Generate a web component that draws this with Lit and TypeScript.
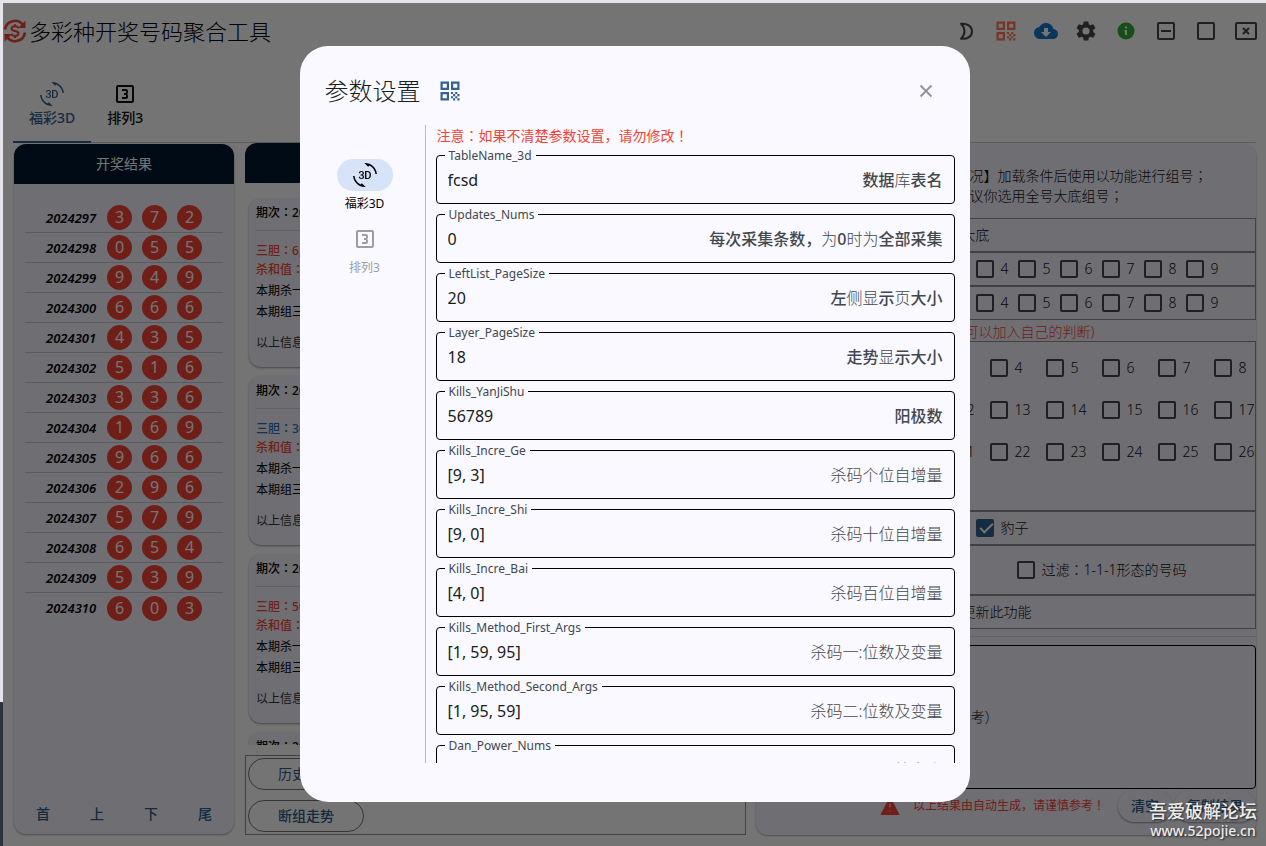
import { LitElement, html, css, svg } from "lit";
import { customElement } from "lit/decorators.js";

const base = css`
  * { box-sizing: border-box; }
  :host {
    font-family: "Noto Sans", "Noto Sans CJK SC", sans-serif;
    font-size: 14px;
    line-height: 20px;
  }
  button {
    font: inherit;
    color: inherit;
    background: none;
    border: 0;
    padding: 0;
    cursor: pointer;
  }
  .icon { display: block; width: 24px; height: 24px; fill: currentColor; flex: none; }
  .mark { font-family: "Noto Sans CJK TC", sans-serif; line-height: 1; }
`;

/* Colons, semicolons and exclamation marks are set in the face that centres them. */
const zh = (text: string) =>
  text.split(/([：；！])/).map(part => (/^[：；！]$/.test(part) ? html`<span class="mark" lang="zh-TW">${part}</span>` : part));

const qr = svg`<path fill-rule="evenodd" d="M2.5 2.5h8.5v8.5h-8.5zM4.700 4.700v4.100h4.100v-4.100zM13 2.500h8.500v8.500h-8.500zM15.200 4.700v4.100h4.100v-4.100zM2.500 13h8.500v8.500h-8.500zM4.700 15.200v4.100h4.100v-4.100z"/><path d="M13 13h2.100v2.100h-2.100zM17.200 13h2.100v2.100h-2.100zM15.100 15.100h2.100v2.100h-2.100zM19.300 15.100h2.200v2.100h-2.200zM13 17.200h2.100v2.100h-2.100zM17.200 17.200h2.100v2.100h-2.100zM15.100 19.300h2.100v2.200h-2.100zM19.300 19.300h2.200v2.200h-2.200z"/>`;
const threeD = svg`<path d="M7.520 21.480C4.250 19.940 1.910 16.760 1.550 13H.050C.560 19.160 5.710 24 12 24l.660-.030-3.810-3.810-1.330 1.320zm.890-6.520c-.190 0-.370-.030-.520-.080-.160-.060-.290-.130-.400-.240-.110-.100-.200-.220-.260-.370-.060-.140-.090-.300-.090-.470h-1.300c0 .360.070.680.210.950.140.270.330.500.560.690.240.180.510.320.820.410.300.100.620.150.960.150.370 0 .720-.050 1.030-.150.320-.100.600-.250.830-.440s.420-.430.550-.720c.130-.290.200-.610.200-.970 0-.190-.020-.380-.070-.560-.050-.180-.120-.350-.230-.510-.100-.160-.240-.300-.400-.430-.170-.130-.370-.230-.610-.310.200-.090.370-.200.520-.330s.270-.270.370-.420c.100-.150.170-.300.220-.460.050-.160.070-.320.070-.480 0-.360-.060-.680-.180-.960-.120-.280-.290-.510-.510-.690-.200-.190-.470-.330-.770-.430C9.100 8.050 8.760 8 8.390 8c-.360 0-.690.050-1 .160-.300.110-.570.260-.790.450-.210.190-.380.410-.510.670-.120.260-.180.540-.180.850h1.300c0-.170.030-.320.090-.450s.140-.250.250-.340c.110-.090.230-.170.380-.220.150-.050.300-.080.480-.080.400 0 .700.100.890.310.190.200.290.490.290.860 0 .180-.030.340-.080.490-.050.150-.140.270-.250.370-.110.100-.250.180-.410.240-.160.060-.360.090-.580.090H7.500v1.030h.770c.220 0 .420.020.600.070s.330.130.450.230c.120.110.220.240.290.400.070.160.100.350.100.570 0 .410-.120.720-.350.930-.230.230-.550.330-.950.330zm8.550-5.920c-.320-.330-.700-.590-1.140-.770-.430-.180-.920-.270-1.460-.270H12v8h2.300c.550 0 1.060-.090 1.510-.270.450-.180.840-.430 1.160-.760.320-.330.570-.730.740-1.190.170-.470.260-.990.260-1.570v-.400c0-.580-.090-1.100-.260-1.570-.180-.470-.430-.870-.750-1.200zm-.390 3.160c0 .420-.050.790-.140 1.130-.100.330-.240.620-.430.850-.190.230-.430.410-.710.530-.290.120-.620.180-.990.180h-.910V9.120h.970c.720 0 1.270.230 1.640.690.380.460.570 1.120.570 1.990v.400zM12 0l-.660.030 3.810 3.810 1.330-1.330c3.270 1.550 5.610 4.720 5.960 8.480h1.500C23.440 4.840 18.290 0 12 0z"/>`;
const looks3 = svg`<path d="M19 3H5c-1.100 0-2 .900-2 2v14c0 1.100.900 2 2 2h14c1.100 0 2-.900 2-2V5c0-1.100-.900-2-2-2zm0 16H5V5h14v14zM15 15v-1.500c0-.830-.670-1.500-1.500-1.500.830 0 1.500-.670 1.500-1.500V9c0-1.110-.900-2-2-2H9v2h4v2h-2v2h2v2H9v2h4c1.100 0 2-.890 2-2z"/>`;

const icons = {
  moon: svg`<path fill="none" stroke="currentColor" stroke-width="2" stroke-linejoin="round" d="M7 4.800c6.800-.800 11 3 11 7.700s-4.200 7.800-11 7.200c4.600-4 4.600-10.600 0-14.900z"/>`,
  cloud: svg`<path d="M19.350 10.040C18.670 6.590 15.640 4 12 4 9.110 4 6.600 5.640 5.350 8.040 2.340 8.360 0 10.910 0 14c0 3.310 2.690 6 6 6h13c2.760 0 5-2.240 5-5 0-2.640-2.050-4.780-4.650-4.960zM17 13l-5 5-5-5h3V9h4v4h3z"/>`,
  gear: svg`<path d="M19.140 12.940c.040-.300.060-.610.060-.940s-.020-.640-.070-.940l2.030-1.580a.490.490 0 0 0 .120-.610l-1.920-3.320a.488.488 0 0 0-.590-.220l-2.390.960c-.500-.380-1.030-.700-1.620-.940l-.360-2.540a.484.484 0 0 0-.480-.410h-3.840c-.240 0-.430.170-.470.410l-.360 2.540c-.590.240-1.130.570-1.620.940l-2.390-.960a.477.477 0 0 0-.590.220L2.740 8.870c-.120.210-.080.470.120.610l2.030 1.580c-.050.300-.090.630-.090.940s.020.640.070.940l-2.030 1.580a.490.490 0 0 0-.120.610l1.920 3.320c.120.220.370.290.590.220l2.390-.960c.500.380 1.030.700 1.620.940l.360 2.540c.050.240.240.410.480.410h3.840c.240 0 .440-.170.470-.410l.360-2.540c.590-.240 1.130-.560 1.620-.940l2.390.960c.220.080.470 0 .590-.220l1.920-3.320a.470.470 0 0 0-.120-.610l-2.010-1.580zM12 15.600A3.600 3.600 0 1 1 12 8.400a3.600 3.600 0 0 1 0 7.200z"/>`,
  info: svg`<path fill-rule="evenodd" d="M12 3.500a8.500 8.500 0 1 0 0 17 8.500 8.500 0 0 0 0-17zM11 7.500h2v2h-2zM10.500 11h2.500v5h-2v-3.500h-.500z"/>`,
  minimize: svg`<path fill="none" stroke="currentColor" stroke-width="2" d="M5 4h14q1 0 1 1v14q0 1-1 1H5q-1 0-1-1V5q0-1 1-1zM7 12h10"/>`,
  maximize: svg`<path fill="none" stroke="currentColor" stroke-width="2" d="M5 4h14q1 0 1 1v14q0 1-1 1H5q-1 0-1-1V5q0-1 1-1z"/>`,
  close: svg`<path fill="none" stroke="currentColor" stroke-width="2" d="M3 4h18q1 0 1 1v14q0 1-1 1H3q-1 0-1-1V5q0-1 1-1zM9 9l6 6M15 9l-6 6"/>`,
};

const icon = (shape: unknown) => html`<svg class="icon" viewBox="0 0 24 24" aria-hidden="true">${shape}</svg>`;

@customElement("results-panel")
class ResultsPanel extends LitElement {
  static styles = [base, css`
    :host { display: flex; flex-direction: column; padding: 1px; }
    .panel {
      flex: 1; display: flex; flex-direction: column; overflow: hidden;
      background: #f2f0fb; border-radius: 12px; box-shadow: 0 1px 2px rgba(0, 0, 0, .35);
    }
    .head { background: #001830; color: #fff; text-align: center; line-height: 40px; height: 40px; }
    .draws { list-style: none; margin: 0; padding: 19px 11px 0; flex: 1; }
    .draw {
      display: flex; align-items: center; gap: 10px; height: 30px; padding-left: 21px;
      border-bottom: 1px solid #c6c6cc;
    }
    .draw:last-child { border-bottom: 0; }
    .term { font-size: 13px; font-weight: 600; font-style: italic; width: 51px; color: #000; }
    .ball {
      width: 25px; height: 25px; border-radius: 50%; background: #f44336; color: #fff;
      text-align: center; line-height: 25px; font-size: 16px;
    }
    .pager { display: flex; padding: 0 2px; color: #2b5c8a; height: 40px; }
    .page { flex: 1; font-weight: 500; }
  `];
  render() {
    const draws = ["372", "055", "949", "666", "435", "516", "336", "169", "966", "296", "579", "654", "539", "603"];
    return html`<section class="panel">
      <div class="head">开奖结果</div>
      <ul class="draws">
        ${draws.map((d, i) => html`<li class="draw"><span class="term">${2024297 + i}</span>${[...d].map(n => html`<span class="ball">${n}</span>`)}</li>`)}
      </ul>
      <nav class="pager">${["首", "上", "下", "尾"].map(t => html`<button class="page">${t}</button>`)}</nav>
    </section>`;
  }
}

@customElement("forecast-panel")
class ForecastPanel extends LitElement {
  static styles = [base, css`
    :host { display: flex; flex-direction: column; min-width: 0; min-height: 0; font-size: 12px; }
    .head { background: #001830; height: 40px; border-radius: 12px 12px 0 0; flex: none; }
    .cards {
      flex: 1; min-height: 0; overflow: hidden; margin: 15px 0 10px; padding: 0 4px;
      display: flex; flex-direction: column; gap: 9px;
    }
    .card {
      flex: none; height: 169px; padding: 5px 7px; border-radius: 12px;
      background: #f2f0fb; box-shadow: 0 1px 2px rgba(0, 0, 0, .4); color: #000;
    }
    .term { margin: 0; height: 28px; font-size: 12px; font-weight: 500; border-bottom: 1px solid #d5d4dc; }
    .line { margin: 0; line-height: 21px; }
    .key { margin: 0; line-height: 19px; font-weight: 500; color: #f44336; }
    .first { margin-top: 10px; }
    .last { margin-bottom: 1px; }
    .blue { color: #2572b8; }
    .foot { margin: 11px 0 0; color: #333; }
    .actions {
      flex: none; height: 80px; border: 1px solid #8f8f94; padding: 2px; display: flex;
      flex-direction: column; align-items: flex-start; justify-content: space-between;
    }
    .pill {
      height: 32px; padding: 0 29px; border: 1px solid #73777f; border-radius: 16px;
      color: #2b5c8a; font-size: 14px; font-weight: 500;
    }
    .thin { font-weight: 400; }
  `];
  render() {
    const cards = [
      { term: "2024311", dan: "6,5", blue: false },
      { term: "2024310", dan: "30", blue: true },
      { term: "2024309", dan: "50", blue: false },
      { term: "2024308", dan: "6", blue: false },
    ];
    return html`<div class="head"></div>
      <div class="cards">
        ${cards.map(c => html`<article class="card">
          <h3 class="term">${zh(`期次：${c.term}`)}</h3>
          <p class="key first ${c.blue ? "blue" : ""}">${zh(`三胆：${c.dan}`)}</p>
          <p class="key last">${zh("杀和值：")}</p>
          <p class="line">本期杀一</p>
          <p class="line">本期组三</p>
          <p class="foot">以上信息</p>
        </article>`)}
      </div>
      <div class="actions"><button class="pill thin">历史走势</button><button class="pill">断组走势</button></div>`;
  }
}

@customElement("filter-panel")
class FilterPanel extends LitElement {
  static styles = [base, css`
    :host {
      display: flex; flex-direction: column; min-width: 0; margin-top: 1px; color: #111;
      background: #f2f0fb; border-radius: 12px; box-shadow: 0 1px 2px rgba(0, 0, 0, .3);
      font-weight: 300; overflow: hidden;
    }
    .intro { margin: 0; padding: 22px 0 12px 200px; white-space: nowrap; }
    .intro-line { display: block; }
    .rows { margin: 0 0 0 4px; }
    .row {
      border: 1px solid #8f8f94; height: 34px; padding-left: 201px;
      display: flex; align-items: center; white-space: nowrap; overflow: hidden;
    }
    .digits { padding-left: 47px; gap: 9px; }
    .check { display: flex; align-items: center; gap: 7px; }
    .box {
      appearance: none; width: 18px; height: 18px; margin: 0; flex: none; display: grid;
      border: 2px solid #43474e; border-radius: 2px;
    }
    .box:checked { background: #36618e; border-color: #36618e; }
    .box:checked::after {
      content: ""; width: 11px; height: 5px; margin: 2px 0 0 2px;
      border: solid #fff; border-width: 0 0 2px 2px; transform: rotate(-45deg);
    }
    .warn { color: #f44336; height: 21px; line-height: 24px; padding-left: 205px; white-space: nowrap; overflow: hidden; }
    .sums {
      display: grid; grid-template-columns: repeat(9, 56px); grid-auto-rows: 42px;
      border: 1px solid #8f8f94; height: 170px; padding: 5px 0 0 5px; overflow: hidden;
    }
    .triple { padding-left: 215px; }
    .shape { height: 50px; padding-left: 256px; }
    .result {
      flex: 1; margin: 8px 0 0 4px; border: 1px solid #000; border-radius: 4px;
      display: flex; align-items: center; padding-left: 210px;
    }
    .rule { border: 0; border-top: 1px solid #d5d4dc; margin: 7px 0 0; width: 100%; }
    .foot { display: flex; align-items: center; gap: 13px; padding: 0 0 13px; height: 46px; flex: none; justify-content: flex-end; }
    .alert { color: #f44336; width: 20px; height: 20px; fill: currentColor; flex: none; }
    .note { color: #f44336; font-size: 12px; font-weight: 400; }
    .act {
      height: 32px; border-radius: 16px; padding: 0 13px; color: #2b5c8a; font-weight: 500;
      box-shadow: 0 1px 2px rgba(0, 0, 0, .4);
    }
    .acts { display: flex; gap: 2px; }
  `];
  check(label: unknown, checked = false) {
    return html`<label class="check"><input class="box" type="checkbox" .checked=${checked}><span>${label}</span></label>`;
  }
  render() {
    const range = (n: number) => Array.from({ length: n }, (_, i) => i);
    return html`
      <p class="intro"><span class="intro-line">${zh("情况】加载条件后使用以功能进行组号；")}</span><span class="intro-line">${zh("建议你选用全号大底组号；")}</span></p>
      <div class="rows">
        <div class="row">大底</div>
        <div class="row digits">${range(10).map(n => this.check(n))}</div>
        <div class="row digits">${range(10).map(n => this.check(n))}</div>
        <div class="warn">可以加入自己的判断)</div>
        <div class="sums">${range(27).map(n => this.check(n))}</div>
        <div class="row triple">${this.check("豹子", true)}</div>
        <div class="row shape">${this.check(zh("过滤：1-1-1形态的号码"))}</div>
        <div class="row">更新此功能</div>
      </div>
      <hr class="rule">
      <div class="result">考）</div>
      <div class="foot">
        <svg class="alert" viewBox="0 0 20 20" aria-hidden="true"><path fill-rule="evenodd" d="M10 1.500 19 18.500H1zM9 7v5h2V7zM9 14v2h2v-2z" stroke="currentColor" stroke-linejoin="round"/></svg>
        <span class="note">${zh("以上结果由自动生成，请谨慎参考！")}</span>
        <div class="acts"><button class="act">清空</button><button class="act">复制结果</button></div>
      </div>`;
  }
}

type Part = [text: string, strong: boolean];
interface Param { name: string; value: string; hint: Part[]; }

@customElement("settings-dialog")
class SettingsDialog extends LitElement {
  static styles = [base, css`
    :host {
      display: flex; flex-direction: column; width: 670px; max-width: 90%; padding: 21px 15px 39px 25px;
      background: #f9f9ff; border-radius: 28px; color: #191c20;
    }
    .top { display: flex; align-items: center; height: 48px; margin-bottom: 10px; flex: none; }
    .title { margin: 0; font-size: 24px; line-height: 32px; font-weight: 300; }
    .code { color: #36618e; margin-left: 17px; flex: 1; }
    .dismiss { color: #8f959c; width: 24px; margin-right: 17px; }
    .body { display: flex; flex: 1; min-height: 0; }
    .rail { width: 101px; flex: none; border-right: 1px solid #b9bbc2; padding: 34px 21px 0 12px; }
    .dest { display: block; width: 56px; font-size: 12px; line-height: 16px; margin: 0 0 12px; color: #000; white-space: nowrap; }
    .pill { display: flex; align-items: center; justify-content: center; width: 56px; height: 32px; border-radius: 16px; margin-bottom: 5px; }
    .on { height: 52px; }
    .on .pill { background: #d7e3f8; }
    .off { color: #9c9ea4; }
    .form { flex: 1; min-width: 0; overflow: hidden; padding-left: 10px; }
    .caution { margin: 0 0 9px; color: #f44336; padding: 1px 0 0 1px; height: 21px; }
    .field {
      position: relative; display: flex; align-items: center; height: 49px; margin-bottom: 10px;
      border: 1px solid #000; border-radius: 4px; padding: 0 11px;
    }
    .name {
      position: absolute; left: 8px; top: -8px; padding: 0 4px; background: #f9f9ff;
      font-size: 12px; line-height: 16px; color: #43474e;
    }
    .value {
      flex: 1; min-width: 0; font: inherit; font-size: 16px; color: #191c20;
      border: 0; padding: 0; background: none; outline: none;
    }
    .hint { font-size: 16px; color: #43474e; font-weight: 300; white-space: nowrap; }
    .strong { font-weight: 500; }
  `];
  params: Param[] = [
    { name: "TableName_3d", value: "fcsd", hint: [["数据", true], ["库", false], ["表名", true]] },
    { name: "Updates_Nums", value: "0", hint: [["每次采集条数，", true], ["为", false], ["0", true], ["时为", false], ["全部采集", true]] },
    { name: "LeftList_PageSize", value: "20", hint: [["左", true], ["侧显", false], ["示", true], ["页", false], ["大小", true]] },
    { name: "Layer_PageSize", value: "18", hint: [["走势", true], ["显", false], ["示大小", true]] },
    { name: "Kills_YanJiShu", value: "56789", hint: [["阳极数", true]] },
    { name: "Kills_Incre_Ge", value: "[9, 3]", hint: [["杀码个位自增量", false]] },
    { name: "Kills_Incre_Shi", value: "[9, 0]", hint: [["杀码十位自增量", false]] },
    { name: "Kills_Incre_Bai", value: "[4, 0]", hint: [["杀码百位自增量", false]] },
    { name: "Kills_Method_First_Args", value: "[1, 59, 95]", hint: [["杀码一:位数及变量", false]] },
    { name: "Kills_Method_Second_Args", value: "[1, 95, 59]", hint: [["杀码二:位数及变量", false]] },
    { name: "Dan_Power_Nums", value: "", hint: [["限放定个", false]] },
  ];
  render() {
    return html`
      <header class="top">
        <h2 class="title">参数设置</h2>
        <span class="code">${icon(qr)}</span>
        <button class="dismiss" aria-label="关闭">${icon(svg`<path fill="none" stroke="currentColor" stroke-width="2" d="M6.500 6.500l11 11M17.500 6.500l-11 11"/>`)}</button>
      </header>
      <div class="body">
        <nav class="rail">
          <button class="dest on"><span class="pill">${icon(threeD)}</span>福彩3D</button>
          <button class="dest off"><span class="pill">${icon(looks3)}</span>排列3</button>
        </nav>
        <div class="form">
          <p class="caution">${zh("注意：如果不清楚参数设置，请勿修改！")}</p>
          ${this.params.map(p => html`<div class="field">
            <label class="name" for=${p.name}>${p.name}</label>
            <input class="value" id=${p.name} .value=${p.value}>
            <span class="hint">${p.hint.map(([t, s]) => html`<span class=${s ? "strong" : ""}>${t}</span>`)}</span>
          </div>`)}
        </div>
      </div>`;
  }
}

@customElement("app-root")
class AppRoot extends LitElement {
  static styles = [base, css`
    :host {
      display: grid; height: 100vh; padding: 3px 0 0 3px; overflow: hidden;
      background: linear-gradient(#e4e5ea 702px, #2e343c 702px);
    }
    .window {
      position: relative; display: flex; flex-direction: column; min-height: 0; min-width: 0;
      background: #fcfcff; border-bottom: 2px solid #9a9a9c;
    }
    .bar { display: flex; align-items: center; height: 56px; flex: none; color: #43474e; }
    .logo { width: 24px; height: 24px; color: #f44336; flex: none; }
    .name { flex: 1; margin: 0 0 0 2px; font-size: 22px; line-height: 28px; font-weight: 300; color: #000; }
    .tool { width: 40px; height: 40px; display: grid; place-items: center; }
    .orange { color: #ff7751; }
    .sky { color: #1d72c4; }
    .green { color: #32a838; }
    .tabs { display: flex; margin: 11px 10px 0; height: 73px; border-bottom: 1px solid #c3c6cf; flex: none; }
    .tab { padding: 12px 16px 0; height: 73px; display: flex; flex-direction: column; align-items: center; color: #111; font-weight: 500; }
    .label { margin-top: 2px; }
    .on { color: #36618e; border-bottom: 2px solid #36618e; }
    .columns {
      flex: 1; min-height: 0; display: grid; gap: 10px; padding: 0 10px 9px;
      grid-template-columns: 222px minmax(0, 1fr) minmax(0, 1fr); grid-template-rows: minmax(0, 1fr);
      margin-bottom: 3px;
    }
    .scrim {
      position: absolute; inset: 0; bottom: -2px; padding: 43px 0 45px; display: flex; justify-content: center;
      background: rgba(0, 0, 0, .54);
    }
    settings-dialog { margin-bottom: 2px; }
    .stamp {
      position: absolute; right: 9px; bottom: 6px; color: #ececec; font-size: 14px; line-height: 20px;
      font-weight: 500; text-shadow: 1px 1px 2px #222; display: grid; justify-items: center;
    }
    .stamp-name { font-size: 18px; font-weight: 500; }
  `];
  render() {
    return html`<div class="window">
      <header class="bar">
        <svg class="logo" viewBox="0 0 24 24" fill="none" stroke="currentColor" stroke-width="2.600" aria-hidden="true">
          <path d="M2 10.500A10 10 0 0 1 20 6M22 13.500A10 10 0 0 1 4 18"/>
          <path d="M22.500 1.500V9H15zM1.500 22.500V15H9z" fill="currentColor" stroke="none"/>
          <path stroke-width="2" d="M15.500 9.300C15 7.800 13.500 7.300 12 7.300c-2 0-3.400.900-3.400 2.400 0 3.300 6.900 1.500 6.900 4.800 0 1.500-1.500 2.400-3.500 2.400-1.800 0-3.100-.700-3.600-2.200M12 5.300v2M12 17v2"/>
        </svg>
        <h1 class="name">多彩种开奖号码聚合工具</h1>
        <button class="tool" aria-label="夜间模式">${icon(icons.moon)}</button>
        <button class="tool orange" aria-label="二维码">${icon(qr)}</button>
        <button class="tool sky" aria-label="下载">${icon(icons.cloud)}</button>
        <button class="tool" aria-label="设置">${icon(icons.gear)}</button>
        <button class="tool green" aria-label="信息">${icon(icons.info)}</button>
        <button class="tool" aria-label="最小化">${icon(icons.minimize)}</button>
        <button class="tool" aria-label="最大化">${icon(icons.maximize)}</button>
        <button class="tool" aria-label="关闭">${icon(icons.close)}</button>
      </header>
      <nav class="tabs">
        <button class="tab on">${icon(threeD)}<span class="label">福彩3D</span></button>
        <button class="tab">${icon(looks3)}<span class="label">排列3</span></button>
      </nav>
      <main class="columns">
        <results-panel></results-panel>
        <forecast-panel></forecast-panel>
        <filter-panel></filter-panel>
      </main>
      <div class="scrim"><settings-dialog role="dialog" aria-modal="true" aria-label="参数设置"></settings-dialog></div>
      <div class="stamp"><span class="stamp-name">吾爱破解论坛</span><span>www.52pojie.cn</span></div>
    </div>`;
  }
}
